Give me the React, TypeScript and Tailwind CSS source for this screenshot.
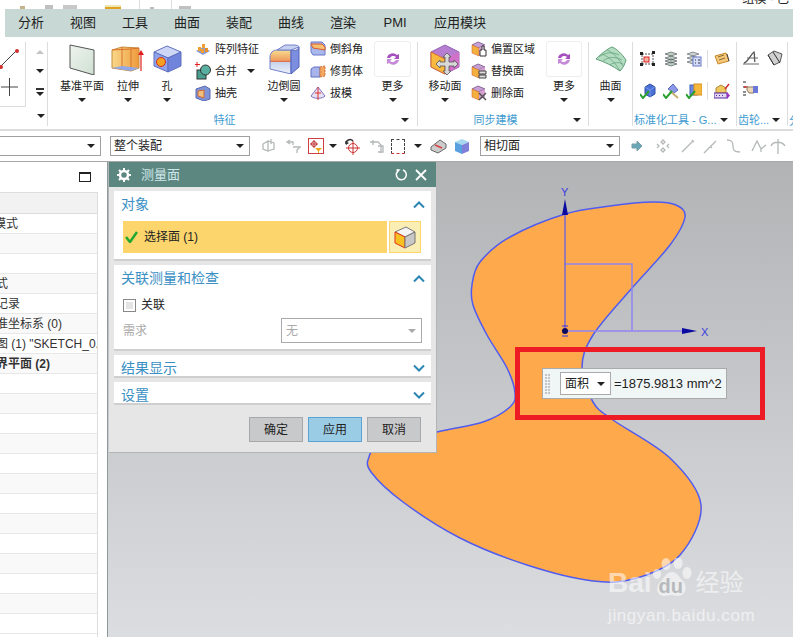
import type { ReactNode } from 'react'

const outline: [number, number][] = [
  [565, 214], [610, 206], [653, 202], [676, 205], [685, 217], [670, 245], [632, 288], [593, 335], [582, 368], [593, 402], [613, 420],
  [670, 458], [701, 505], [680, 555], [637, 578], [593, 581], [527, 565], [460, 538], [403, 502], [371, 472], [369, 457], [380, 448], [437, 432],
  [483, 422], [510, 407], [515, 393], [507, 368], [487, 335], [473, 305], [472, 285], [480, 262], [510, 237],
]

// closed smooth curve through the outline points
function smoothPath(points: [number, number][]) {
  const n = points.length
  let d = `M${points[0][0]} ${points[0][1]}`
  for (let i = 0; i < n; i++) {
    const [p0, p1, p2, p3] = [points[(i - 1 + n) % n], points[i], points[(i + 1) % n], points[(i + 2) % n]]
    d += ` C${p1[0] + (p2[0] - p0[0]) / 6} ${p1[1] + (p2[1] - p0[1]) / 6} ${p2[0] - (p3[0] - p1[0]) / 6} ${p2[1] - (p3[1] - p1[1]) / 6} ${p2[0]} ${p2[1]}`
  }
  return d + 'Z'
}

function Caret({ className = '' }: { className?: string }) {
  return <span className={`inline-block h-0 w-0 border-x-[4px] border-t-[4px] border-x-transparent border-t-[#222] ${className}`} />
}

function Icon({ w, h, children, className = '' }: { w: number; h: number; children: ReactNode; className?: string }) {
  return <svg width={w} height={h} viewBox={`0 0 ${w} ${h}`} className={`shrink-0 ${className}`}>{children}</svg>
}

function Large({ w, label, icon, ml = 0 }: { w: number; label: string; icon: ReactNode; ml?: number }) {
  return (
    <div className="flex shrink-0 flex-col items-center pt-[3px]" style={{ width: w, marginLeft: ml }}>
      <div className="flex h-[36px] items-center justify-center">{icon}</div>
      <div className="mt-[2px] h-[14px] whitespace-nowrap text-[11px] leading-[14px] text-[#222]">{label}</div>
      <Caret className="mt-[5px]" />
    </div>
  )
}

function More({ ml, w = 37 }: { ml: number; w?: number }) {
  return (
    <div className="flex shrink-0 flex-col items-center pt-[3px]" style={{ width: w, marginLeft: ml }}>
      <div className="flex h-[36px] w-full items-center justify-center rounded-[3px] border border-[#eeeeee]">
        <Icon w={16} h={16}>
          <path d="M2 7a6 6 0 0 1 10-3l2-1v5H9l2-2a4 4 0 0 0-6 1Z" fill="#a650c0" />
          <path d="M14 9a6 6 0 0 1-10 3l-2 1V8h5L5 10a4 4 0 0 0 6-1Z" fill="#c58ad8" />
        </Icon>
      </div>
      <div className="mt-[2px] h-[14px] text-[11px] leading-[14px] text-[#222]">更多</div>
      <Caret className="mt-[5px]" />
    </div>
  )
}

function SmallCol({ ml, width, rows }: { ml: number; width: number; rows: { icon: ReactNode; label: string; caret?: boolean }[] }) {
  return (
    <div className="flex shrink-0 flex-col" style={{ width, marginLeft: ml }}>
      {rows.map((row) => (
        <div key={row.label} className="flex h-[22px] items-center gap-[4px] whitespace-nowrap text-[11px] text-[#222]">
          {row.icon}
          <span>{row.label}</span>
          {row.caret ? <Caret className="ml-[6px]" /> : null}
        </div>
      ))}
    </div>
  )
}

function Divider() {
  return <div className="mt-[5px] h-[84px] w-px shrink-0 bg-[#dddddd]" />
}

const DatumPlane = (
  <Icon w={26} h={31}>
    <defs><linearGradient id="dp" x1="0" y1="0" x2="1" y2="1"><stop offset="0" stopColor="#eef3ee" /><stop offset="1" stopColor="#cfe0d2" /></linearGradient></defs>
    <path d="M1 1l24 5v25L1 24Z" fill="url(#dp)" stroke="#555" />
  </Icon>
)

const Extrude = (
  <Icon w={34} h={28}>
    <defs><linearGradient id="ex" x1="0" y1="0" x2="1" y2="0"><stop offset="0" stopColor="#f8d98a" /><stop offset="1" stopColor="#ef9a3c" /></linearGradient></defs>
    <path d="M1 5l10-3 17 1v20l-8 3-19-3Z" fill="url(#ex)" stroke="#c98a3a" />
    <path d="M11 2v20M20 4v22M1 5l19-1 8-1" fill="none" stroke="#d9722e" />
    <path d="M1 23l10-2 17 2-8 3Z" fill="#90a8e8" />
    <path d="M30 26V9" stroke="#e02020" strokeWidth="1.2" />
    <path d="M30 5l-3 5h6Z" fill="#e02020" />
  </Icon>
)

const Hole = (
  <Icon w={30} h={28}>
    <path d="M2 7l13-6 14 6-13 6Z" fill="#cdd6f4" stroke="#6070c0" />
    <path d="M2 7l14 6v14L2 21Z" fill="#8fa2ec" stroke="#6070c0" />
    <path d="M29 7l-13 6v14l13-6Z" fill="#7084dc" stroke="#6070c0" />
    <circle cx="9" cy="17" r="4.5" fill="#f5a020" stroke="#d03020" />
  </Icon>
)

const Blend = (
  <Icon w={31} h={30}>
    <defs>
      <linearGradient id="bl" x1="0" y1="0" x2="0" y2="1"><stop offset="0" stopColor="#f8dc90" /><stop offset=".42" stopColor="#f0a060" /><stop offset=".48" stopColor="#e07050" /><stop offset=".52" stopColor="#c8d4ec" /><stop offset="1" stopColor="#eef2fa" /></linearGradient>
    </defs>
    <path d="M1 13c0-4 3-7 7-7h14v24L1 25Z" fill="url(#bl)" stroke="#7080c8" />
    <path d="M22 6c3 0 6 2 8-3v20l-8 7Z" fill="#7c8ee0" stroke="#5060b8" />
    <path d="M8 6l8-5h9c3 0 5 1 5 2l-8 3Z" fill="#c8d2f0" stroke="#7080c8" />
  </Icon>
)

const MoveFace = (
  <Icon w={30} h={31}>
    <path d="M15 1l14 7v15l-14 7-14-7V8Z" fill="#b77dd0" stroke="#9060b0" />
    <path d="M1 8l14 7v15L1 23Z" fill="#f7b93f" stroke="#d86a30" />
    <path d="M29 8l-14 7v15l14-7Z" fill="#d070c8" />
    <path d="M17 9L21 13H19V18H24V16L28 20L24 24V22H19V27H21L17 31L13 27H15V22H10V24L6 20L10 16V18H15V13H13Z" fill="#d8d8d8" stroke="#555" strokeWidth=".8" />
  </Icon>
)

const Surface = (
  <Icon w={32} h={26}>
    <path d="M1 13C8 6 14 2 17 1c5 2 10 7 14 13-1 3-2 7-6 11-7-5-15-9-24-12Z" fill="#b4dcc0" stroke="#5f9e78" />
    <path d="M7 8c7 3 13 8 18 17M12 4c7 3 12 9 16 16M4 11c5-4 12-6 20-2M8 15c5-4 11-5 19-1M15 19c4-3 8-3 13-1" fill="none" stroke="#5f9e78" strokeWidth=".7" />
  </Icon>
)

const Tiny = ({ kind }: { kind: string }) => {
  if (kind === 'pattern') return <Icon w={16} h={16}><path d="M1 10l7-4 7 4-7 4Z" fill="#8a9ad8" /><rect x="3" y="6" width="3" height="4" fill="#f0a030" /><rect x="7" y="3" width="3" height="4" fill="#f0a030" /><rect x="10" y="7" width="3" height="4" fill="#e89028" /><rect x="6" y="8" width="3" height="4" fill="#f0a030" /></Icon>
  if (kind === 'unite') return <Icon w={16} h={18}><path d="M2 0v5M0 2.500h5" stroke="#e02020" /><rect x="2" y="8" width="9" height="9" fill="#4aa090" stroke="#333" /><circle cx="10.500" cy="8" r="5" fill="#5ab0a0" stroke="#333" /></Icon>
  if (kind === 'shell') return <Icon w={16} h={16}><path d="M1 4l9-3 5 3v10l-6 2-8-3Z" fill="#7f93d8" stroke="#5a6ab0" /><path d="M3 6l6-1v8l-6-2Z" fill="#f0c080" stroke="#d06a30" /></Icon>
  if (kind === 'chamfer') return <Icon w={16} h={16}><path d="M1 1h11l3 3v10H3L1 11Z" fill="#a8b8ec" stroke="#6878c8" /><path d="M1 3h11l3 3v3L3 7Z" fill="#f6c070" stroke="#d85a30" /></Icon>
  if (kind === 'trim') return <Icon w={16} h={16}><path d="M1 6l3-2h6v10H1Z" fill="#a8b4ec" stroke="#6070c0" /><path d="M10 4l5-1v10l-5 1Z" fill="#f2a860" stroke="#d06a30" strokeDasharray="2 1" /></Icon>
  if (kind === 'draft') return <Icon w={16} h={16}><path d="M8 2l7 9c-2 3-12 3-14 0Z" fill="#e6e2f2" stroke="#8070c0" /><path d="M8 2v13M5 8h6" stroke="#e03030" /></Icon>
  return <Icon w={16} h={16}><path d="M1 4l6-3 7 3-7 3Z" fill="#c8a0d8" stroke="#8a6a9a" /><path d="M1 4l7 3v8l-7-3Z" fill="#f3b03e" stroke="#d86a30" strokeWidth=".6" /><path d="M14 4l-6 3v8l6-3Z" fill="#d8a0d0" />{kind === 'offset' ? <path d="M9 9h2V5h2v4h2v6H9Z" fill="#fff" stroke="#333" /> : kind === 'swap' ? <path d="M8 8h7v3H8ZM8 12h7v3H8Z" fill="#ddd" stroke="#444" /> : <path d="M8 8l7 7M15 8l-7 7" stroke="#555" strokeWidth="1.500" />}</Icon>
}

const Check = () => <path d="M0 11l3 4 6-7" fill="none" stroke="#2aa030" strokeWidth="2" />

// standardisation and gear tool icons, one drawing per button
const toolIcons: Record<string, ReactNode> = {
  frame: <><path d="M2 3h11v10H2Z" fill="none" stroke="#555" strokeDasharray="2 1" /><path d="M0 1h3v3H0ZM12 0h3v3h-3ZM0 12h3v3H0ZM12 12h3v3h-3Z" fill="#222" /><rect x="4" y="6" width="5" height="5" fill="#f4b0a0" stroke="#d82020" /></>,
  stack: <><path d="M2 3l6-2 6 2-6 2ZM2 7l6-2 6 2-6 2ZM2 10l6-2 6 2-6 2ZM2 13l6-2 6 2-6 2Z" fill="#bcd0c0" stroke="#445" strokeWidth=".6" /></>,
  stackdoc: <><path d="M1 3l6-2 6 2-6 2ZM1 7l6-2 6 2-6 2ZM1 11l6-2 6 2-6 2Z" fill="#c8d4cc" stroke="#556" strokeWidth=".6" /><rect x="7" y="6" width="8" height="9" fill="#d4dcf8" stroke="#6878c8" /><path d="M9 9h1M12 9h2M9 12h1M12 12h2" stroke="#334" /></>,
  tag: <><path d="M1 5l11-3 3 8-11 3Z" fill="#f4c878" stroke="#c88830" /><path d="M4 6l6-2M5 9l6-2" stroke="#8a6a30" /><path d="M13 3l2 7" stroke="#444" /></>,
  boxcheck: <><path d="M5 4l5-3 5 3v7l-5 3-5-3Z" fill="#4a70d8" stroke="#3050a8" /><path d="M5 4l5 3 5-3M10 7v7" fill="none" stroke="#90b0f0" strokeWidth=".6" /><Check /></>,
  hammer: <><path d="M5 6l5-5 5 6-4 3Z" fill="#8c98e8" stroke="#5a68c0" /><path d="M7 8l8 7" stroke="#c8b070" strokeWidth="2" /><Check /></>,
  cubes: <><rect x="4" y="2" width="7" height="10" fill="#6c88e0" stroke="#4060b8" /><rect x="8" y="1" width="8" height="11" fill="#f6b83a" stroke="#d89020" /><Check /></>,
  kit: <><path d="M2 5l5-3 5 3v5H2Z" fill="#f0c860" stroke="#b08830" /><path d="M11 6l4-5" stroke="#d03030" strokeWidth="1.500" /><rect x="0" y="10" width="13" height="5" fill="#e0d8f0" stroke="#5a28a0" /><path d="M2 12.500h1M5 12.500h1M8 12.500h1" stroke="#5a28a0" /><path d="M13 9l3 3.500-3 3.500Z" fill="#a030c0" /></>,
  gearA: <><path d="M1 13C5 12 8 4 11 2c1 3 0 8 1 10" fill="none" stroke="#555" strokeWidth="1.300" /><path d="M0 14h16M4 8h11" stroke="#666" /></>,
  gearB: <><path d="M1 5l6-4 8 3-2 8-6 3Z" fill="#d0d0d0" stroke="#555" /><path d="M6 2l7 11M1 5l6 10" fill="none" stroke="#333" /></>,
  pointer: <><path d="M0 2h3M0 7h3M0 12h3M0 15h3" stroke="#222" /><path d="M1 7h4" stroke="#d03030" strokeWidth="1.500" /><path d="M4 7h7v6H6l-2-3Z" fill="#ecd8b8" stroke="#8a7a60" /><rect x="10" y="6" width="5" height="7" fill="#6c78d8" /></>,
}

const Tool = ({ kind, ml = 0 }: { kind: string; ml?: number }) => (
  <div style={{ marginLeft: ml }} className="shrink-0">
    <Icon w={16} h={16}>{toolIcons[kind]}</Icon>
  </div>
)

const Gray = ({ ml, d }: { ml: number; d: string }) => (
  <div className="shrink-0" style={{ marginLeft: ml }}>
    <Icon w={16} h={16}><path d={d} fill="none" stroke="#b4b8b8" strokeWidth="1.3" /></Icon>
  </div>
)

function Combo({ label, className }: { label: string; className: string }) {
  return (
    <div className={`flex h-[20px] shrink-0 items-center justify-between border border-[#a0a0a0] bg-white pl-[3px] pr-[5px] text-[12px] text-[#222] ${className}`}>
      <span>{label}</span>
      <Caret />
    </div>
  )
}

function Section({ title, open, children, className = '' }: { title: string; open?: boolean; children?: ReactNode; className?: string }) {
  return (
    <div className={`overflow-hidden border-b-2 border-[#cfcfcf] bg-white ${className}`}>
      <div className="flex h-[26px] items-center justify-between pl-[7px] pr-[6px] text-[14px] text-[#3a8fc4]">
        <span className="leading-[26px]">{title}</span>
        <svg width="12" height="9" viewBox="0 0 12 9"><path d={open ? 'M1 7.500l5-5 5 5' : 'M1 1.500l5 5 5-5'} fill="none" stroke="#2c86b4" strokeWidth="2" /></svg>
      </div>
      {children}
    </div>
  )
}

const rows = [
  { text: '模式', shift: '-ml-[6px]' },
  { text: '' },
  { text: '' },
  { text: '式', shift: '-ml-[4px]' },
  { text: '记录', shift: '-ml-[4px]' },
  { text: '准坐标系 (0)', shift: '-ml-[4px]' },
  { text: '图 (1) "SKETCH_0.bd', shift: '-ml-[4px]' },
  { text: '界平面 (2)', shift: '-ml-[4px]', bold: true },
]

export default function App() {
  const listRows = [...rows, ...Array.from({ length: 13 }, () => ({ text: '' }))]
  return (
    <div className="flex h-[637px] w-[793px] flex-col overflow-hidden bg-white font-['Liberation_Sans','Noto_Sans_CJK_SC',sans-serif]">
      {/* clipped window title strip */}
      <div className="flex h-[9px] shrink-0 items-end overflow-hidden bg-white">
        <div className="ml-[20px] h-[3px] w-[5px] bg-[#c8b48c]" />
        <div className="ml-[20px] h-[4px] w-[8px] bg-[#c0c0c0]" />
        <div className="ml-[10px] h-[4px] w-[14px] bg-[#c8c8c8]" />
        <div className="ml-[28px] h-[4px] w-[16px] border-b-2 border-[#e0a020] bg-[#f2e6b0]" />
        <div className="ml-[18px] h-[9px] w-px bg-[#ddd]" />
        <div className="ml-[10px] h-[2px] w-[4px] bg-[#bbb]" />
        <div className="ml-[17px] h-[9px] w-px bg-[#ddd]" />
        <div className="ml-[7px] h-[3px] w-[12px] bg-[#c0c0c0]" />
        <div className="ml-auto mr-[4px] h-[9px] overflow-hidden text-[12px] leading-[12px] text-[#222]"><div className="-mt-[7px]">组模 - 巴</div></div>
      </div>

      {/* menu bar */}
      <div className="flex h-[28px] shrink-0 bg-[#c8d8d5]">
        <div className="h-full w-[5px] bg-white" />
        <div className="flex items-center gap-[26px] pl-[13px] text-[13px] text-[#222]">
          {['分析', '视图', '工具', '曲面', '装配', '曲线', '渲染', 'PMI', '应用模块'].map((item) => <span key={item} className="min-w-[26px] whitespace-nowrap text-center">{item}</span>)}
        </div>
      </div>

      {/* ribbon */}
      <div className="flex h-[94px] shrink-0 border-b-2 border-[#dcdcdc]">
        <div className="flex h-[90px] w-[47px] shrink-0">
          <div className="mt-[5px] flex h-[65px] w-[26px] shrink-0 flex-col border-b border-r border-[#dddddd]">
            <Icon w={25} h={32}><path d="M1 24L17 8" stroke="#444" /><circle cx="1" cy="25" r="2" fill="#d03030" /><circle cx="17" cy="9" r="2" fill="#d03030" /></Icon>
            <Icon w={25} h={32}><path d="M1 13h17M9.500 4v18" stroke="#444" /></Icon>
          </div>
          <div className="flex flex-1 flex-col items-center pl-[6px] pt-[13px]">
            <span className="h-0 w-0 border-x-[4px] border-b-[4px] border-x-transparent border-b-[#c4c4c4]" />
            <Caret className="mt-[15px]" />
            <div className="mt-[15px] h-[2px] w-[8px] bg-[#333]" />
            <Caret className="mt-[2px]" />
            <Caret className="mt-[18px] ml-[3px]" />
          </div>
        </div>
        <Divider />

        <div className="flex h-[90px] w-[369px] shrink-0 flex-col pt-[1px]">
          <div className="flex flex-1">
            <Large ml={10} w={48} label="基准平面" icon={DatumPlane} />
            <Large w={44} label="拉伸" icon={Extrude} />
            <Large w={34} label="孔" icon={Hole} />
            <SmallCol ml={11} width={64} rows={[
              { icon: <Tiny kind="pattern" />, label: '阵列特征' },
              { icon: <Tiny kind="unite" />, label: '合并', caret: true },
              { icon: <Tiny kind="shell" />, label: '抽壳' },
            ]} />
            <Large ml={3} w={44} label="边倒圆" icon={Blend} />
            <SmallCol ml={4} width={53} rows={[
              { icon: <Tiny kind="chamfer" />, label: '倒斜角' },
              { icon: <Tiny kind="trim" />, label: '修剪体' },
              { icon: <Tiny kind="draft" />, label: '拔模' },
            ]} />
            <More ml={11} />
          </div>
          <div className="flex h-[14px] items-center pr-[8px]">
            <div className="flex-1 text-center text-[11px] text-[#3d9bd0]">特征</div>
            <Caret />
          </div>
        </div>
        <Divider />

        <div className="flex h-[90px] w-[170px] shrink-0 flex-col pt-[1px]">
          <div className="flex flex-1">
            <Large ml={5} w={44} label="移动面" icon={MoveFace} />
            <SmallCol ml={4} width={64} rows={[
              { icon: <Tiny kind="offset" />, label: '偏置区域' },
              { icon: <Tiny kind="swap" />, label: '替换面' },
              { icon: <Tiny kind="delete" />, label: '删除面' },
            ]} />
            <More ml={11} w={36} />
          </div>
          <div className="flex h-[14px] items-center pr-[7px]">
            <div className="flex-1 text-center text-[11px] text-[#3d9bd0]">同步建模</div>
            <Caret />
          </div>
        </div>
        <Divider />

        <div className="flex h-[90px] w-[43px] shrink-0 flex-col pt-[1px]">
          <Large w={43} label="曲面" icon={Surface} />
        </div>
        <Divider />

        <div className="flex h-[90px] w-[103px] shrink-0 flex-col pt-[1px]">
          <div className="flex flex-1 flex-col gap-[14px] pt-[12px]">
            <div className="flex items-center">
              <Tool ml={7} kind="frame" />
              <Tool ml={7} kind="stack" />
              <Tool ml={7} kind="stackdoc" />
              <div className="ml-[5px] mr-[6px] h-[18px] w-px bg-[#dddddd]" />
              <Tool kind="tag" />
            </div>
            <div className="flex items-center">
              <Tool ml={7} kind="boxcheck" />
              <Tool ml={7} kind="hammer" />
              <Tool ml={7} kind="cubes" />
              <div className="ml-[5px] mr-[6px] h-[18px] w-px bg-[#dddddd]" />
              <Tool kind="kit" />
            </div>
          </div>
          <div className="flex h-[14px] items-center pr-[8px]">
            <div className="w-[86px] whitespace-nowrap pl-[1px] text-[11px] text-[#3d9bd0]">标准化工具 - G...</div>
            <Caret className="ml-auto" />
          </div>
        </div>
        <Divider />

        <div className="flex h-[90px] w-[50px] shrink-0 flex-col pt-[1px]">
          <div className="flex flex-1 flex-col gap-[14px] pt-[12px]">
            <div className="flex">
              <Tool ml={6} kind="gearA" />
              <Tool ml={8} kind="gearB" />
            </div>
            <div className="flex"><Tool ml={6} kind="pointer" /></div>
          </div>
          <div className="flex h-[14px] items-center pr-[7px]">
            <div className="whitespace-nowrap pl-[1px] text-[11px] text-[#3d9bd0]">齿轮...</div>
            <Caret className="ml-auto" />
          </div>
        </div>
        <Divider />
        <div className="mb-[2px] mt-auto h-[14px] overflow-hidden pl-[1px] text-[11px] text-[#3d9bd0]">分</div>
      </div>

      {/* selection toolbar */}
      <div className="flex h-[31px] shrink-0 items-center border-b border-[#a8a8a8]">
        <Combo label="" className="w-[101px] border-l-0" />
        <Combo label="整个装配" className="ml-[9px] w-[140px]" />
        <Gray ml={11} d="M2 6l5-3v10l-5-2ZM7 3l6 2v6l-6 2M10 1v5" />
        <Gray ml={8} d="M2 4h6v3M5 2L2 4l3 2M8 9h7l-3 3v3" />
        <div className="ml-[7px] flex h-[16px] w-[16px] shrink-0 items-center justify-center border border-[#d04040]">
          <Icon w={14} h={14}>
            <path d="M5 1v8M1 5h8" stroke="#c03030" />
            <circle cx="5" cy="5" r="2.500" fill="none" stroke="#c03030" />
            <path d="M6 9h7l-3 3v2H9v-2Z" fill="#f0a820" />
          </Icon>
        </div>
        <Caret className="ml-[5px]" />
        <div className="ml-[7px]">
          <Icon w={16} h={17}>
            <circle cx="9" cy="10" r="4.500" fill="none" stroke="#d03030" />
            <path d="M9 3v14M2 10h14" stroke="#d03030" />
            <path d="M2 6a4 4 0 0 1 7-3" fill="none" stroke="#333" strokeWidth="1.500" />
            <path d="M1 3l1 4 3-2Z" fill="#333" />
          </Icon>
        </div>
        <Gray ml={9} d="M1 4h8l3 3v8M4 2v5M9 8h5v6H9" />
        <div className="ml-[6px] h-[15px] w-[14px] shrink-0 border border-dashed border-[#444] border-b-[#d03030]" />
        <Caret className="ml-[9px]" />
        <div className="ml-[8px]">
          <Icon w={17} h={16}>
            <path d="M1 9l9-7 6 4v4l-8 5-7-3Z" fill="#ccc" stroke="#666" />
            <path d="M5 7l7 3" stroke="#d84040" strokeWidth="1.500" />
          </Icon>
        </div>
        <div className="ml-[7px]">
          <Icon w={16} h={17}>
            <path d="M1 4l7-3 7 3-7 3Z" fill="#a8d8f0" />
            <path d="M1 4l7 3v9l-7-3Z" fill="#58a0e0" />
            <path d="M15 4l-7 3v9l7-3Z" fill="#8080d8" />
          </Icon>
        </div>
        <Combo label="相切面" className="ml-[10px] w-[140px]" />
        <div className="ml-[11px]">
          <Icon w={12} h={12}><path d="M1 4h5V1l5 5-5 5V8H1Z" fill="#6aa8b8" stroke="#7a9aa8" /></Icon>
        </div>
        <Gray ml={12} d="M8 2l2 2-2 2-2-2ZM8 10l2 2-2 2-2-2ZM2 6l2 2-2 2M14 6l-2 2 2 2" />
        <Gray ml={9} d="M2 14L13 3M12 2l2 2" />
        <Gray ml={7} d="M1 15L13 3M7 8l2 2" />
        <Gray ml={7} d="M1 2c5 0 6 2 6 6s1 6 7 6" />
        <Gray ml={9} d="M1 13L6 3l4 8 5-4M10 11v3" />
        <Gray ml={3} d="M8 1v15M1 8c2-5 11-5 14 0" />
      </div>

      {/* body */}
      <div className="flex min-h-0 flex-1">
        <div className="flex w-[108px] shrink-0 flex-col border-r border-[#8c9a9a] bg-white">
          <div className="flex h-[30px] shrink-0 items-center justify-end pr-[16px]">
            <div className="h-[10px] w-[12px] border border-t-2 border-[#222]" />
          </div>
          <div className="mr-[9px] min-h-0 flex-1 overflow-hidden border-r border-t border-[#dddddd]">
            <div className="h-[21px] border-b border-[#dddddd] bg-[#f2f2f2]" />
            {listRows.map((row, i) => (
              <div key={i} className={`h-[20px] overflow-hidden whitespace-nowrap border-b border-[#e8e8e8] text-[12px] leading-[20px] text-[#333] ${i % 2 === 1 ? 'bg-[#f9f9f9]' : 'bg-white'} ${row.bold ? 'font-bold' : ''}`}>
                <div className={row.shift ?? ''}>{row.text}</div>
              </div>
            ))}
          </div>
        </div>

        {/* graphics window */}
        <div className="relative min-w-0 flex-1 bg-[linear-gradient(#b2b3b5,#dcdde0)]">
          <svg width="685" height="475" viewBox="108 162 685 475" className="absolute left-0 top-0">
            <path d={smoothPath(outline)} fill="#ffa94d" stroke="#4f5cf0" strokeWidth="1.500" />
            <path d="M565 264H632V331" fill="none" stroke="#8f85f0" strokeWidth="1.500" />
            <path d="M565 331H684" stroke="#8f85f0" strokeWidth="1.500" />
            <path d="M565 331V210" stroke="#5a5cf0" strokeWidth="1.200" />
            <path d="M565 199l-3 16h6Z" fill="#0a0aa0" />
            <path d="M697 331l-15-3v6Z" fill="#0a0aa0" />
            <circle cx="565" cy="331" r="3" fill="#0a0a60" />
            <path d="M562 326h6M562 336h6" stroke="#3030e0" />
            <text x="561" y="196" fontSize="11" fill="#3a3ae0">Y</text>
            <text x="701" y="336" fontSize="11" fill="#3a3ae0">X</text>
          </svg>

          {/* measure dialog */}
          <div className="absolute left-[1px] top-0 flex h-[291px] w-[328px] flex-col border-b border-r border-[#b4b4b4] bg-[#e6e6e6]">
            <div className="flex h-[25px] shrink-0 items-center bg-[#5c8780] pl-[8px] pr-[9px] text-[#cfe6ea]">
              <svg width="14" height="14" viewBox="0 0 14 14"><circle cx="7" cy="7" r="4" fill="none" stroke="#fff" strokeWidth="2.500" /><path d="M7 0v3M7 11v3M0 7h3M11 7h3M2 2l2 2M10 10l2 2M12 2l-2 2M4 10l-2 2" stroke="#fff" strokeWidth="2" /></svg>
              <span className="ml-[10px] text-[13px]">测量面</span>
              <svg width="13" height="13" viewBox="0 0 13 13" className="ml-auto"><path d="M8 2a5 5 0 1 1-5 1" fill="none" stroke="#fff" strokeWidth="1.500" /><path d="M1.500 1l4 .5L2 5Z" fill="#fff" /></svg>
              <svg width="12" height="12" viewBox="0 0 12 12" className="ml-[7px]"><path d="M1 1l10 10M11 1L1 11" stroke="#fff" strokeWidth="1.800" /></svg>
            </div>

            <div className="ml-[5px] mr-[5px] mt-[4px] flex flex-col gap-[4px]">
              <Section title="对象" open className="h-[70px]">
                <div className="mt-[4px] flex gap-[2px] pl-[9px] pr-[9px]">
                  <div className="flex h-[32px] w-[264px] items-center bg-[#fcd56d] pl-[2px] text-[12px] text-[#222]">
                    <svg width="13" height="12" viewBox="0 0 13 12"><path d="M1 6l4 5 7-10" fill="none" stroke="#20a830" strokeWidth="2.500" /></svg>
                    <span className="ml-[6px]">选择面 (1)</span>
                  </div>
                  <div className="flex h-[32px] w-[32px] items-center justify-center border border-[#fcd56d] bg-[#fbeeb5]">
                    <svg width="22" height="23" viewBox="0 0 22 23"><path d="M1 6l11-5 9 5-10 5Z" fill="#f4f4f4" stroke="#777" /><path d="M1 6l10 5v11L1 17Z" fill="#f8c020" stroke="#e03020" /><path d="M21 6l-10 5v11l10-5Z" fill="#c8c8c8" stroke="#777" /></svg>
                  </div>
                </div>
              </Section>
              <Section title="关联测量和检查" open className="h-[86px]">
                <div className="mt-[7px] flex h-[14px] items-center pl-[9px] text-[12px] text-[#222]">
                  <div className="h-[13px] w-[13px] border border-[#888] bg-[#e4e4e4] shadow-[inset_0_0_0_2px_#ffffff]" />
                  <span className="ml-[5px]">关联</span>
                </div>
                <div className="mt-[6px] flex items-center justify-between pl-[9px] pr-[9px] text-[12px] text-[#aaaaaa]">
                  <span>需求</span>
                  <div className="flex h-[25px] w-[141px] items-center justify-between border border-[#aaaaaa] pl-[4px] pr-[5px]">
                    <span>无</span>
                    <span className="h-0 w-0 border-x-[4px] border-t-[4px] border-x-transparent border-t-[#aaaaaa]" />
                  </div>
                </div>
              </Section>
              <Section title="结果显示" className="h-[23px]" />
              <Section title="设置" className="h-[23px]" />
            </div>

            <div className="mt-[12px] flex justify-end gap-[5px] pr-[15px] text-[12px] text-[#222]">
              <div className="flex h-[25px] w-[54px] items-center justify-center border border-[#a8a8a8] bg-[#c8c9cb]">确定</div>
              <div className="flex h-[25px] w-[54px] items-center justify-center border border-[#58a4d4] bg-[#9acce6]">应用</div>
              <div className="flex h-[25px] w-[54px] items-center justify-center border border-[#a8a8a8] bg-[#c8c9cb]">取消</div>
            </div>
          </div>

          {/* red callout with the measured value */}
          <div className="absolute left-[407px] top-[185px] flex h-[73px] w-[250px] items-center border-[5px] border-[#ed1c24] pl-[22px]">
            <div className="flex h-[31px] w-[185px] shrink-0 items-center border border-[#aaaaaa] bg-[#f0f5f6] text-[13px] text-[#222]">
              <div className="ml-[2px] grid grid-cols-2 gap-[1px]">
                {Array.from({ length: 14 }, (_, i) => <span key={i} className="h-[2px] w-[2px] bg-[#c4c4c4]" />)}
              </div>
              <div className="ml-[10px] flex h-[23px] w-[51px] shrink-0 items-center justify-between border border-[#aaaaaa] bg-white pl-[4px] pr-[5px] text-[12px]">
                <span>面积</span>
                <Caret />
              </div>
              <span className="ml-[3px] whitespace-nowrap">=1875.9813 mm^2</span>
            </div>
          </div>

          {/* watermark */}
          <div className="absolute left-[500px] top-[396px] flex w-[150px] flex-col text-white/55">
            <div className="flex h-[42px] items-end">
              <span className="text-[28px] font-bold leading-[34px]">Bai</span>
              <div className="relative h-[42px] w-[44px] shrink-0">
                <svg width="44" height="42" viewBox="0 0 44 42" className="absolute left-0 top-0">
                  <ellipse cx="5" cy="16" rx="4" ry="5" fill="currentColor" />
                  <ellipse cx="14" cy="6" rx="4.500" ry="6" fill="currentColor" />
                  <ellipse cx="26" cy="5" rx="4.500" ry="6" fill="currentColor" />
                  <ellipse cx="35" cy="15" rx="4.500" ry="6" fill="currentColor" />
                  <path d="M20 14c5 0 7 5 11 9 5 5 3 15-5 15-3 0-4-1-7-1s-4 1-7 1C5 38 3 29 8 24c4-3 6-10 12-10Z" fill="currentColor" />
                </svg>
                <span className="absolute left-[7px] top-[18px] text-[20px] font-bold leading-[20px] text-[#b8b9bc]">du</span>
              </div>
              <span className="whitespace-nowrap text-[24px] leading-[34px]">经验</span>
            </div>
            <div className="mt-[6px] whitespace-nowrap text-[17px] leading-[20px] tracking-[0.6px]">jingyan.baidu.com</div>
          </div>
        </div>
      </div>
    </div>
  )
}
